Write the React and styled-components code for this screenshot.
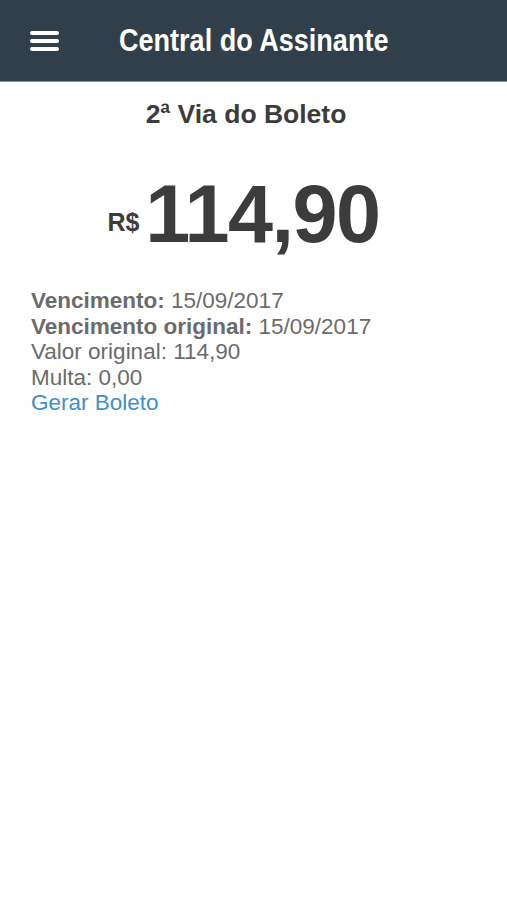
import React from 'react'
import styled, { createGlobalStyle } from 'styled-components';

const GlobalStyle = createGlobalStyle`
    body {
        margin: 0;
        background: #fff;
        font-family: "Liberation Sans", Arial, sans-serif;
    }
`

const Header = styled.header`
    height: 81px;
    background: #313f4a;
    display: flex;
    align-items: center;
    border-bottom: 1px solid #8a939a;
`
const MenuButton = styled.div`
    width: 29px;
    margin-left: 30px;
    display: flex;
    flex-direction: column;
    gap: 4px;
    > span {
        height: 4px;
        border-radius: 2px;
        background: #fff;
    }
`
const Title = styled.h1`
    margin: 0 0 0 60px;
    color: #fff;
    font-size: 32px;
    font-weight: bold;
    transform: scaleX(0.845);
    transform-origin: left center;
    white-space: nowrap;
`
const Content = styled.main`
    padding: 0 31px;
    color: #444;
`
const PageTitle = styled.h2`
    margin: 17px 0 0;
    text-align: center;
    font-size: 26.5px;
    font-weight: bold;
    color: #3c3c3c;
    padding-right: 15px;
`
const Price = styled.div`
    display: flex;
    justify-content: center;
    align-items: baseline;
    margin-top: 36px;
    padding-right: 20px;
    color: #3c3c3c;
    font-weight: bold;
`
const Currency = styled.span`
    font-size: 25px;
    margin-right: 6px;
    position: relative;
    top: -11px;
`
const Amount = styled.span`
    font-size: 81px;
    letter-spacing: -1.5px;
    line-height: 96px;
`
const Details = styled.div`
    margin-top: 26px;
    font-size: 22.5px;
    line-height: 25.5px;
    color: #6b6b6b;
`
const Line = styled.div`
    b {
        font-weight: bold;
    }
`
const Link = styled.a`
    color: #3f8fcb;
    text-decoration: none;
`

export default function App() {
    return (
        <>
            <GlobalStyle />
            <Header>
                <MenuButton><span /><span /><span /></MenuButton>
                <Title>Central do Assinante</Title>
            </Header>
            <Content>
                <PageTitle>2ª Via do Boleto</PageTitle>
                <Price>
                    <Currency>R$</Currency>
                    <Amount>114,90</Amount>
                </Price>
                <Details>
                    <Line><b>Vencimento:</b> 15/09/2017</Line>
                    <Line><b>Vencimento original:</b> 15/09/2017</Line>
                    <Line>Valor original: 114,90</Line>
                    <Line>Multa: 0,00</Line>
                    <Line><Link href="#">Gerar Boleto</Link></Line>
                </Details>
            </Content>
        </>
    );
}
